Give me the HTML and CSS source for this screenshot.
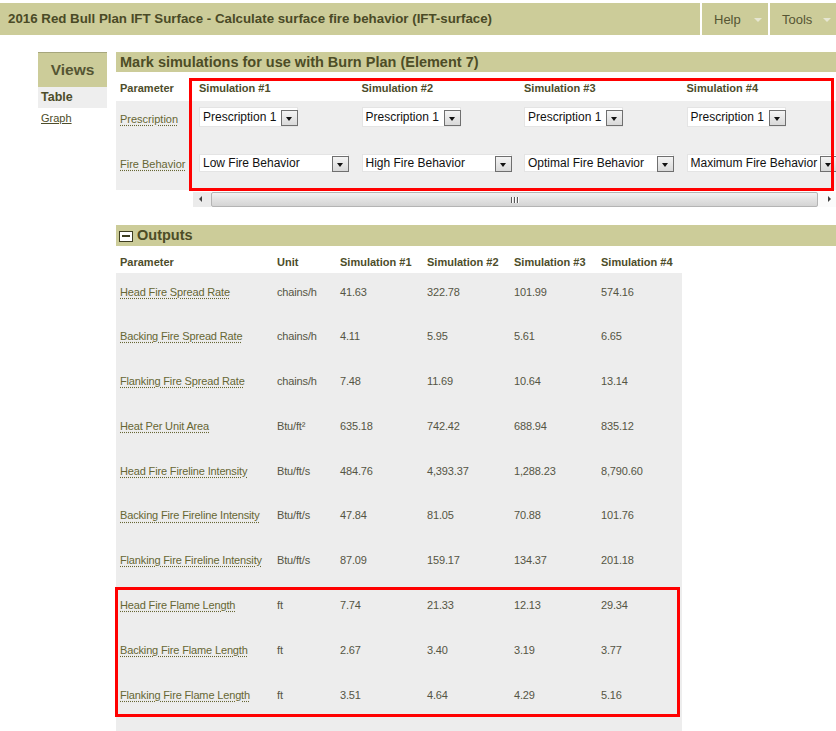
FILE: index.html
```html
<!DOCTYPE html>
<html>
<head>
<meta charset="utf-8">
<link rel="stylesheet" href="styles.css">
</head>
<body>
<header class="topbar">
  <div class="title">2016 Red Bull Plan IFT Surface - Calculate surface fire behavior (IFT-surface)</div>
  <div class="menu menu-help"><span>Help</span><i class="caret"></i></div>
  <div class="menu menu-tools"><span>Tools</span><i class="caret"></i></div>
</header>

<div class="page">
  <aside class="sidebar">
    <div class="views-head">Views</div>
    <div class="views-item active">Table</div>
    <div class="views-item"><a href="#">Graph</a></div>
  </aside>

  <main class="main">
    <div class="bar">Mark simulations for use with Burn Plan (Element 7)</div>
    <div class="sim-area">
      <div class="param-col">
        <div class="cell head">Parameter</div>
        <div class="cell row1 label"><a href="#" class="dotted">Prescription</a></div>
        <div class="cell row2 label"><a href="#" class="dotted">Fire Behavior</a></div>
      </div>
      <div class="scroll-cols">
        <div class="sim-grid">
          <div class="cell head">Simulation #1</div>
          <div class="cell head">Simulation #2</div>
          <div class="cell head">Simulation #3</div>
          <div class="cell head">Simulation #4</div>

          <div class="cell row1"><div class="sel sel-p"><span>Prescription 1</span><b class="arr"></b></div></div>
          <div class="cell row1"><div class="sel sel-p"><span>Prescription 1</span><b class="arr"></b></div></div>
          <div class="cell row1"><div class="sel sel-p"><span>Prescription 1</span><b class="arr"></b></div></div>
          <div class="cell row1"><div class="sel sel-p"><span>Prescription 1</span><b class="arr"></b></div></div>

          <div class="cell row2"><div class="sel sel-f"><span>Low Fire Behavior</span><b class="arr"></b></div></div>
          <div class="cell row2"><div class="sel sel-f"><span>High Fire Behavior</span><b class="arr"></b></div></div>
          <div class="cell row2"><div class="sel sel-f"><span>Optimal Fire Behavior</span><b class="arr"></b></div></div>
          <div class="cell row2"><div class="sel sel-f"><span>Maximum Fire Behavior</span><b class="arr"></b></div></div>
        </div>
      </div>
    </div>
    <div class="hscroll">
      <div class="sb-btn sb-left"><i></i></div>
      <div class="sb-thumb"><span class="grip"><i></i><i></i><i></i></span></div>
      <div class="sb-btn sb-right"><i></i></div>
    </div>

    <div class="bar bar-out"><span class="minus"><i></i></span>Outputs</div>
    <table class="out">
      <colgroup>
        <col class="c-param"><col class="c-unit"><col class="c-sim"><col class="c-sim"><col class="c-sim"><col class="c-sim4">
      </colgroup>
      <thead>
        <tr><th>Parameter</th><th>Unit</th><th>Simulation #1</th><th>Simulation #2</th><th>Simulation #3</th><th>Simulation #4</th></tr>
      </thead>
      <tbody>
        <tr><td><a href="#" class="dotted">Head Fire Spread Rate</a></td><td>chains/h</td><td>41.63</td><td>322.78</td><td>101.99</td><td>574.16</td></tr>
        <tr><td><a href="#" class="dotted">Backing Fire Spread Rate</a></td><td>chains/h</td><td>4.11</td><td>5.95</td><td>5.61</td><td>6.65</td></tr>
        <tr><td><a href="#" class="dotted">Flanking Fire Spread Rate</a></td><td>chains/h</td><td>7.48</td><td>11.69</td><td>10.64</td><td>13.14</td></tr>
        <tr><td><a href="#" class="dotted">Heat Per Unit Area</a></td><td>Btu/ft²</td><td>635.18</td><td>742.42</td><td>688.94</td><td>835.12</td></tr>
        <tr><td><a href="#" class="dotted">Head Fire Fireline Intensity</a></td><td>Btu/ft/s</td><td>484.76</td><td>4,393.37</td><td>1,288.23</td><td>8,790.60</td></tr>
        <tr><td><a href="#" class="dotted">Backing Fire Fireline Intensity</a></td><td>Btu/ft/s</td><td>47.84</td><td>81.05</td><td>70.88</td><td>101.76</td></tr>
        <tr><td><a href="#" class="dotted">Flanking Fire Fireline Intensity</a></td><td>Btu/ft/s</td><td>87.09</td><td>159.17</td><td>134.37</td><td>201.18</td></tr>
        <tr><td><a href="#" class="dotted">Head Fire Flame Length</a></td><td>ft</td><td>7.74</td><td>21.33</td><td>12.13</td><td>29.34</td></tr>
        <tr><td><a href="#" class="dotted">Backing Fire Flame Length</a></td><td>ft</td><td>2.67</td><td>3.40</td><td>3.19</td><td>3.77</td></tr>
        <tr><td><a href="#" class="dotted">Flanking Fire Flame Length</a></td><td>ft</td><td>3.51</td><td>4.64</td><td>4.29</td><td>5.16</td></tr>
        <tr class="filler"><td colspan="6"></td></tr>
      </tbody>
    </table>
  </main>
</div>

<div class="annot annot-1"></div>
<div class="annot annot-2"></div>
</body>
</html>
```

FILE: styles.css
```css
html, body {
  margin: 0;
  padding: 0;
  background: #ffffff;
}
body {
  font-family: "Liberation Sans", Arial, sans-serif;
  color: #555533;
  overflow: hidden;
  height: 731px;
}
a {
  color: #666633;
}

/* top bar */
.topbar {
  margin-top: 3px;
  height: 32px;
  background: #cccc99;
  display: flex;
}
.title {
  flex: 1;
  padding-left: 8px;
  font-weight: bold;
  font-size: 13.3px;
  line-height: 32px;
  color: #4a4a26;
  white-space: nowrap;
}
.menu {
  box-sizing: border-box;
  flex: none;
  width: 68px;
  display: flex;
  align-items: center;
  border-left: 2px solid #ffffff;
  font-size: 13px;
  color: #555533;
}
.menu-help {
  padding-left: 12px;
}
.menu-help span { margin-right: 13px; }
.menu-tools {
  padding-left: 12px;
}
.menu-tools span { margin-right: 11px; }
.caret {
  width: 0;
  height: 0;
  border-left: 4px solid transparent;
  border-right: 4px solid transparent;
  border-top: 4px solid #e6e6d2;
  margin-top: 1px;
}

/* layout */
.page {
  display: flex;
  margin-top: 17px;
}
.sidebar {
  margin-left: 38px;
  width: 69px;
  flex: none;
}
.views-head {
  height: 34px;
  border-top: 1px solid #a6a67c;
  background: #cccc99;
  text-align: center;
  font-weight: bold;
  font-size: 15.5px;
  line-height: 34px;
  color: #555533;
}
.views-item {
  font-size: 11px;
  padding-left: 3px;
  padding-top: 4px;
  line-height: 13px;
}
.views-item.active {
  background: #eeeeee;
  height: 21px;
  line-height: 21px;
  padding-top: 0;
  font-weight: bold;
  font-size: 12.5px;
  color: #4d4d2a;
}
.views-item a { color: #4d4d2a; }

.main {
  margin-left: 9px;
  flex: 1;
  min-width: 0;
}
.bar {
  background: #cccc99;
  height: 20px;
  line-height: 20px;
  padding-left: 4px;
  font-weight: bold;
  font-size: 14.5px;
  color: #4d4d26;
  white-space: nowrap;
}

/* simulations selection */
.sim-area {
  display: flex;
}
.param-col {
  width: 79px;
  flex: none;
}
.scroll-cols {
  flex: 1;
  overflow: hidden;
}
.sim-grid {
  display: grid;
  grid-template-columns: repeat(4, 162.5px);
  width: 650px;
}
.cell {
  box-sizing: border-box;
  padding-left: 4px;
  font-size: 11px;
  line-height: 13px;
  white-space: nowrap;
}
.cell.head {
  height: 29px;
  padding-top: 10px;
  font-weight: bold;
  color: #4d4d2a;
}
.cell.row1 {
  height: 47px;
  padding-top: 6px;
  background: #eeeeee;
}
.cell.row2 {
  height: 42px;
  padding-top: 6px;
  background: #eeeeee;
}
.cell.row1.label { padding-top: 12px; }
.cell.row2.label { padding-top: 10px; }

.dotted {
  text-decoration: underline dotted;
  text-underline-offset: 2px;
  color: #666633;
}

.sel {
  box-sizing: border-box;
  display: flex;
  align-items: center;
  background: #ffffff;
  border: 1px solid #e4e4e4;
  font-size: 12px;
  color: #111111;
}
.sel span {
  flex: 1;
  padding-left: 3px;
  overflow: hidden;
}
.sel-p {
  width: 99px;
  height: 20px;
}
.sel-f {
  width: 150px;
  height: 18px;
}
.arr {
  box-sizing: border-box;
  width: 17px;
  height: 16px;
  margin-top: 2px;
  border: 1px solid #6f6f6f;
  background: linear-gradient(#f4f4f4, #d9d9d9);
  position: relative;
  flex: none;
  margin-right: -1px;
}
.sel-f .arr { height: 16px; margin-top: 1px; margin-bottom: -1px; }
.arr::after {
  content: "";
  position: absolute;
  left: 4px;
  top: 6px;
  border-left: 3.5px solid transparent;
  border-right: 3.5px solid transparent;
  border-top: 4px solid #111111;
}

/* fake horizontal scrollbar */
.hscroll {
  margin-left: 77px;
  margin-top: 2px;
  height: 15px;
  display: flex;
  background: #f4f4f4;
}
.sb-btn {
  width: 18px;
  flex: none;
  position: relative;
}
.sb-left { background: #ebebeb; }
.sb-right { width: 18px; background: #fbfbfb; }
.sb-btn i {
  position: absolute;
  top: 4px;
  width: 0;
  height: 0;
  border-top: 3.5px solid transparent;
  border-bottom: 3.5px solid transparent;
}
.sb-left i { left: 6px; border-right: 3px solid #404040; }
.sb-right i { left: 10px; border-left: 3px solid #404040; }
.sb-thumb {
  flex: 1;
  box-sizing: border-box;
  border: 1px solid #b4b4b4;
  border-radius: 2px;
  background: linear-gradient(#f2f2f2, #e2e2e2 50%, #d4d4d4);
  display: flex;
  align-items: center;
  justify-content: center;
}
.grip {
  display: flex;
  gap: 2px;
}
.grip i {
  width: 1px;
  height: 6px;
  background: #5a5a5a;
  box-shadow: 1px 0 0 #ffffff;
}

/* outputs */
.bar-out {
  margin-top: 18px;
  height: 21px;
  line-height: 21px;
  padding-left: 3px;
  display: flex;
  align-items: center;
}
.minus {
  box-sizing: border-box;
  width: 14px;
  height: 11px;
  border: 1px solid #3d3d20;
  background: #ffffff;
  margin-right: 4px;
  margin-top: 1px;
  position: relative;
}
.minus i {
  position: absolute;
  left: 2px;
  right: 2px;
  top: 3px;
  height: 2px;
  background: #3d3d20;
}

.out {
  border-collapse: collapse;
  table-layout: fixed;
  width: 564px;
  font-size: 11px;
  line-height: 13px;
}
.c-param { width: 157px; }
.c-unit { width: 63px; }
.c-sim { width: 87px; }
.c-sim4 { width: 85px; }
.out th {
  height: 27px;
  box-sizing: border-box;
  padding: 10px 0 0 4px;
  text-align: left;
  vertical-align: top;
  font-weight: bold;
  color: #4d4d2a;
  white-space: nowrap;
}
.out td {
  height: 44.8px;
  box-sizing: border-box;
  padding: 12.5px 0 0 4px;
  vertical-align: top;
  background: #ededed;
  color: #555544;
  white-space: nowrap;
  letter-spacing: -0.15px;
}
.out .filler td { height: 30px; }

/* annotation overlays */
.annot {
  position: absolute;
  box-sizing: border-box;
  border: 3px solid #ff0000;
  pointer-events: none;
}
.annot-1 {
  left: 189px;
  top: 78px;
  width: 645px;
  height: 113px;
}
.annot-2 {
  left: 115px;
  top: 587px;
  width: 565px;
  height: 130px;
}
```
